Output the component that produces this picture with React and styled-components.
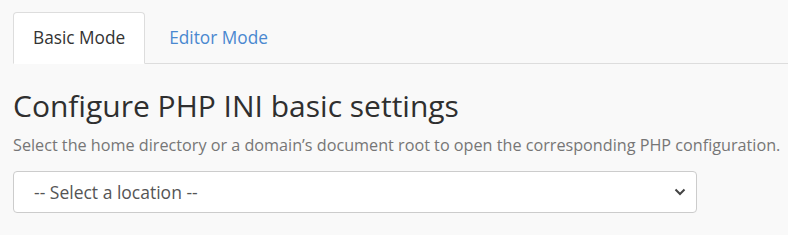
import React, { useState } from "react";
import styled, { createGlobalStyle } from "styled-components";

const GlobalStyle = createGlobalStyle`
  html, body {
    margin: 0;
    background: #f9f9f9;
    font-family: "Open Sans", "Liberation Sans", sans-serif;
  }
`;

const Page = styled.div`
  padding: 12px 0 0 13px;
`;

const Tabs = styled.div`
  display: flex;
  border-bottom: 1px solid #ddd;
`;

const Tab = styled.button`
  font-family: inherit;
  font-size: 17.25px;
  line-height: 24px;
  padding: 13px 19px;
  margin-bottom: -1px;
  border: 1px solid ${({ $active }) => ($active ? "#ddd" : "transparent")};
  border-bottom-color: ${({ $active }) => ($active ? "#fff" : "transparent")};
  border-radius: 4px 4px 0 0;
  background: ${({ $active }) => ($active ? "#fff" : "transparent")};
  color: ${({ $active }) => ($active ? "#333" : "#4a88d0")};
  cursor: pointer;
  margin-right: 4px;
`;

const Title = styled.h1`
  margin: 24px 0 10px;
  font-size: 30px;
  line-height: 36px;
  font-weight: 400;
  color: #2f2f2f;
`;

const Hint = styled.p`
  margin: 0 0 15px;
  font-size: 16.2px;
  line-height: 22px;
  color: #767676;
  white-space: nowrap;
`;

const SelectWrap = styled.div`
  position: relative;
  width: 684px;
`;

const Select = styled.select`
  appearance: none;
  width: 100%;
  height: 42px;
  padding: 0 40px 0 20px;
  font-family: inherit;
  font-size: 17.5px;
  color: #555;
  background: #fff;
  border: 1px solid #ccc;
  border-radius: 4px;
  box-sizing: border-box;
`;

const Chevron = styled.svg`
  position: absolute;
  right: 11px;
  top: 16px;
  pointer-events: none;
`;

export default function App() {
  const [mode, setMode] = useState("basic");
  return (
    <>
      <GlobalStyle />
      <Page>
        <Tabs>
          <Tab $active={mode === "basic"} onClick={() => setMode("basic")}>
            Basic Mode
          </Tab>
          <Tab $active={mode === "editor"} onClick={() => setMode("editor")}>
            Editor Mode
          </Tab>
        </Tabs>
        <Title>Configure PHP INI basic settings</Title>
        <Hint>
          Select the home directory or a domain’s document root to open the
          corresponding PHP configuration.
        </Hint>
        <SelectWrap>
          <Select defaultValue="">
            <option value="">-- Select a location --</option>
          </Select>
          <Chevron width="12" height="10" viewBox="0 0 12 10">
            <path d="M1.5 2.5 L6 7 L10.5 2.5" fill="none" stroke="#444" strokeWidth="2" />
          </Chevron>
        </SelectWrap>
      </Page>
    </>
  );
}
